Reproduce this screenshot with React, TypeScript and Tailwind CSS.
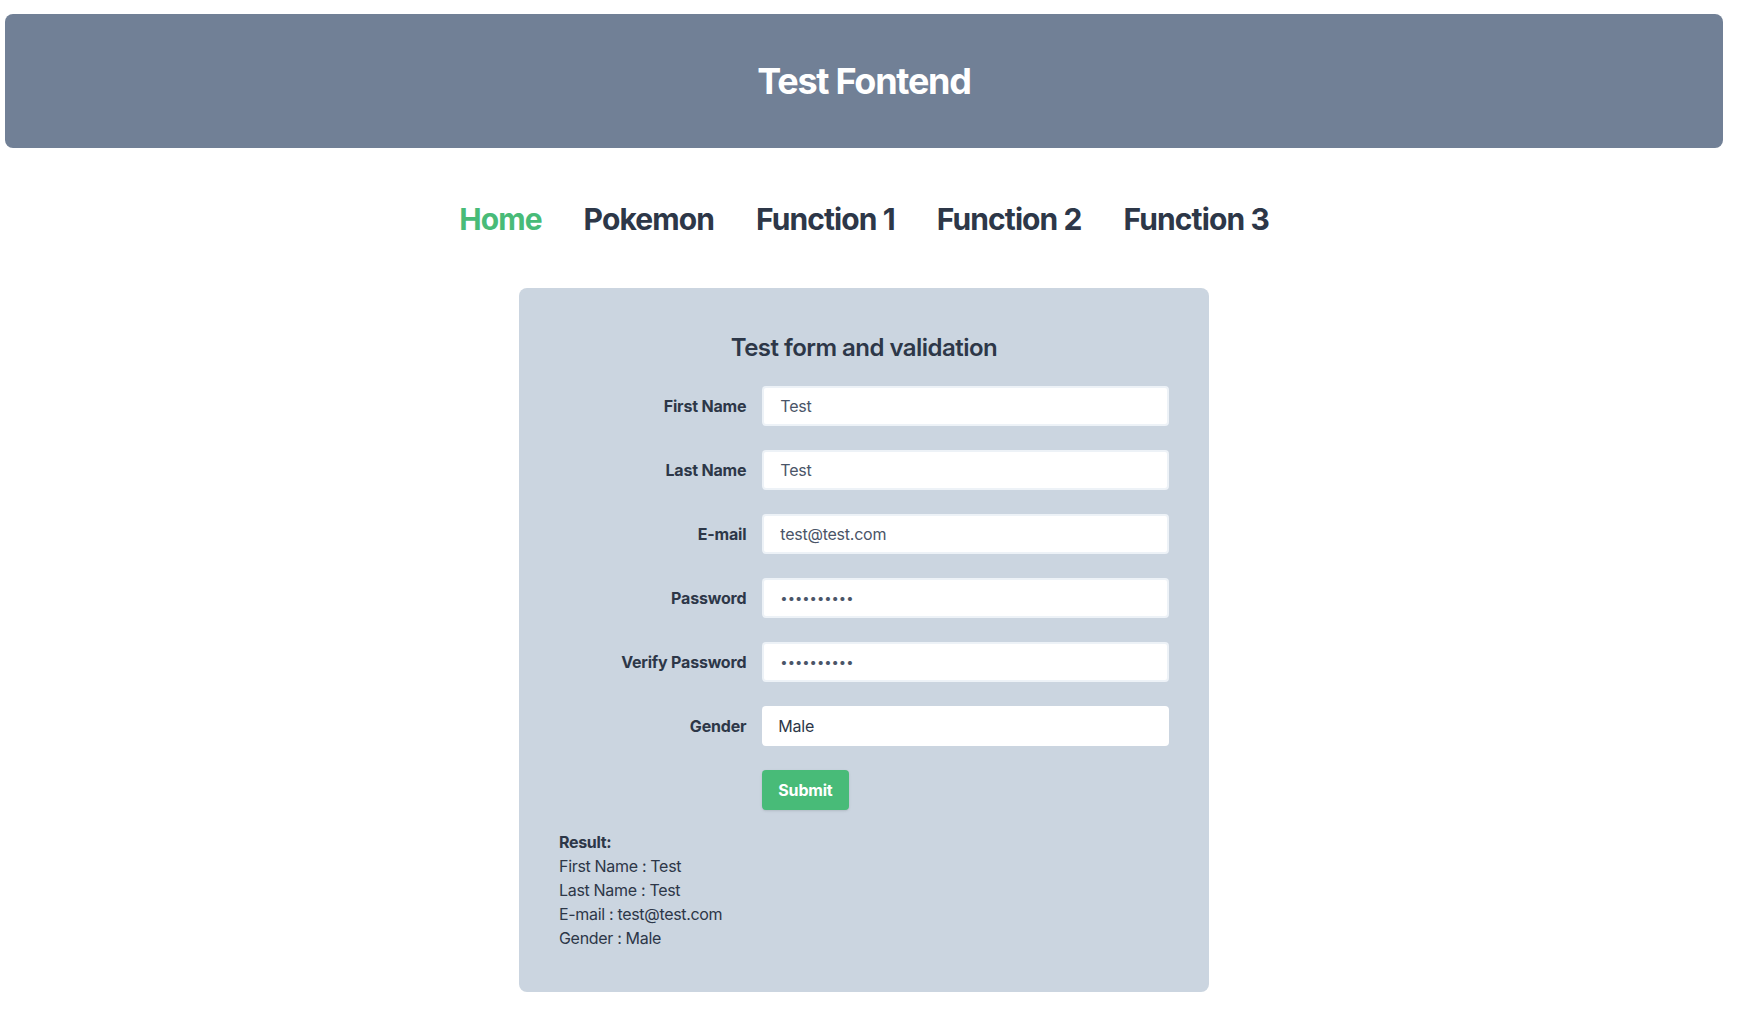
import React, { useState } from 'react'

const links = ['Home', 'Pokemon', 'Function 1', 'Function 2', 'Function 3']

function Row({ label, children }: { label: string; children: React.ReactNode }) {
  return (
    <div className="flex items-center mb-6">
      <div className="w-1/3 pr-4 text-right font-bold text-[#2d3748] tracking-[-0.012em]">{label}</div>
      <div className="w-2/3">{children}</div>
    </div>
  )
}

export default function App() {
  const [form] = useState({
    firstName: 'Test',
    lastName: 'Test',
    email: 'test@test.com',
    password: '1234567890',
    verify: '1234567890',
    gender: 'Male',
  })

  const inputClass =
    'w-full h-10 bg-white border-2 border-[#edf2f7] rounded px-4 text-[#4a5568] tracking-[-0.015em] outline-none'
  const passClass =
    'w-full h-10 bg-white border-2 border-[#edf2f7] rounded px-4 text-[13px] text-[#4a5568] outline-none'

  return (
    <div className="min-h-screen bg-white pt-[14px] pl-[5px] pr-[15px] font-['Inter',sans-serif]">
      <div className="bg-[#718096] rounded-lg py-[47px] text-center">
        <h1 className="text-4xl leading-10 font-bold text-white tracking-[-0.035em]">Test Fontend</h1>
      </div>

      <nav className="flex justify-center gap-[42px] mt-[53px]">
        {links.map((l, i) => (
          <a
            key={l}
            href="#"
            className={
              i === 0
                ? 'text-3xl leading-9 font-bold tracking-[-0.03em] text-[#48bb78]'
                : 'text-3xl leading-9 font-bold tracking-[-0.03em] text-[#2d3748]'
            }
          >
            {l}
          </a>
        ))}
      </nav>

      <div className="mt-[51px]">
        <div className="w-[690px] mx-auto bg-[#cbd5e0] rounded-lg px-10 pt-[44px] pb-[42px]">
          <h2 className="text-2xl leading-8 font-semibold text-[#2d3748] text-center tracking-[-0.022em] mb-[22px]">
            Test form and validation
          </h2>
          <form onSubmit={(e) => e.preventDefault()}>
            <Row label="First Name">
              <input className={inputClass} type="text" value={form.firstName} readOnly />
            </Row>
            <Row label="Last Name">
              <input className={inputClass} type="text" value={form.lastName} readOnly />
            </Row>
            <Row label="E-mail">
              <input className={inputClass} type="email" value={form.email} readOnly />
            </Row>
            <Row label="Password">
              <input className={passClass} type="password" value={form.password} readOnly />
            </Row>
            <Row label="Verify Password">
              <input className={passClass} type="password" value={form.verify} readOnly />
            </Row>
            <Row label="Gender">
              <select
                className="w-full h-10 bg-white rounded px-4 text-[#2d3748] tracking-[-0.015em] appearance-none outline-none"
                value={form.gender}
                onChange={() => {}}
              >
                <option>Male</option>
                <option>Female</option>
              </select>
            </Row>
            <div className="flex mt-[1px]">
              <div className="w-1/3" />
              <div className="w-2/3">
                <button
                  type="submit"
                  className="bg-[#48bb78] text-white font-bold px-4 py-2 rounded shadow tracking-[-0.012em]"
                >
                  Submit
                </button>
              </div>
            </div>
          </form>

          <div className="mt-5 text-[#2d3748] leading-6 tracking-[-0.02em]">
            <p className="font-bold">Result:</p>
            <p>First Name : {form.firstName}</p>
            <p>Last Name : {form.lastName}</p>
            <p>E-mail : {form.email}</p>
            <p>Gender : {form.gender}</p>
          </div>
        </div>
      </div>
    </div>
  )
}
